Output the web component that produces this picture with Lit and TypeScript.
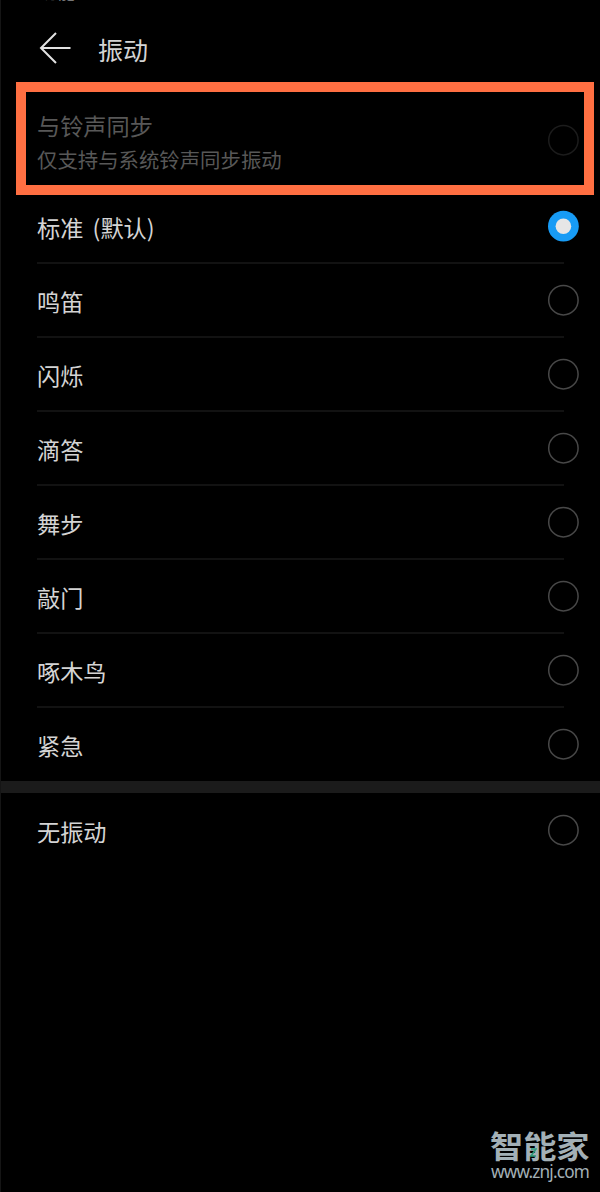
import { LitElement, html, css, svg } from "lit";
import { customElement, property } from "lit/decorators.js";
import { classMap } from "lit/directives/class-map.js";

@customElement("radio-mark")
class RadioMark extends LitElement {
  @property({ type: Boolean }) checked = false;
  @property({ type: Boolean }) disabled = false;

  static styles = css`
    :host { display: block; width: 32px; height: 32px; flex: none; }
    svg { display: block; }
    .ring { fill: none; stroke: #484848; stroke-width: 1.5; }
    .ring.off { stroke: #1c1c1c; }
    .disc { fill: #179bf5; }
    .dot { fill: #e6e6e6; }
  `;

  render() {
    return html`<svg width="32" height="32" viewBox="0 0 32 32">
      ${this.checked
        ? svg`<circle class="disc" cx="16.4" cy="16.2" r="15.4"/><circle class="dot" cx="16.4" cy="16.2" r="7.8"/>`
        : svg`<circle class=${classMap({ ring: true, off: this.disabled })} cx="16.4" cy="16.2" r="14.7"/>`}
    </svg>`;
  }
}

@customElement("app-root")
class AppRoot extends LitElement {
  static styles = css`
    :host {
      display: flex; flex-direction: column; position: relative;
      box-sizing: border-box; width: 600px; height: 1192px; overflow: hidden;
      background: #000; color: #d4d4d4;
      font-family: "Noto Sans CJK SC", sans-serif;
      font-weight: 400;
    }
    .edge { position: absolute; left: 0; top: 0; width: 1px; height: 100%; background: #151515; }
    .clipped { height: 2px; margin-bottom: 2px; padding-left: 40px; overflow: hidden; display: flex; align-items: flex-end; font-size: 17.5px; line-height: 20px; color: #777; }
    header { display: flex; align-items: center; height: 78px; padding-left: 39px; box-sizing: border-box; }
    .back { width: 33px; height: 34px; margin-top: 10px; }
    h1 { margin: 12px 0 0 26px; font-size: 25px; line-height: 36px; font-weight: inherit; }
    .framed {
      display: flex; align-items: center; justify-content: space-between;
      box-sizing: border-box; width: 578px; height: 113px; margin-left: 15.5px;
      border: 10px solid #ff6f42; padding: 2px 4.5px 0 11.5px;
    }
    .copy { color: #585858; padding-top: 4px; }
    .name { font-size: 23.2px; line-height: 34px; word-spacing: 4px; }
    .note { font-size: 20.4px; line-height: 34px; }
    .row { display: flex; align-items: center; height: 74px; padding: 0 21px 0 37px; box-sizing: border-box; justify-content: space-between; }
    .row .name { padding-top: 2px; }
    .list { margin-top: -6px; }
    .rule { height: 2px; margin: -1px 36px -1px 37px; background: #121212; }
    .band { height: 12px; background: #1b1b1b; margin-top: -0.5px; }
    .brand { position: absolute; left: 490px; top: 1127px; width: 110px; color: #a3b0b6; }
    .logo { font-size: 33.2px; line-height: 35px; height: 36px; font-weight: 700; white-space: nowrap; transform: scaleY(0.92); }
    .site { font-family: "Noto Sans", sans-serif; font-size: 17.2px; letter-spacing: -0.8px; line-height: 18px; font-weight: 400; margin-left: 1px; white-space: nowrap; }
    .spark { position: absolute; left: 40px; top: 21px; width: 7px; height: 9px; }
  `;

  private names = ["标准 (默认)", "鸣笛", "闪烁", "滴答", "舞步", "敲门", "啄木鸟", "紧急"];

  render() {
    return html`
      <div class="clipped">功能</div>
      <header>
        <svg class="back" viewBox="0 0 33 34" fill="none" stroke="#e2e2e2" stroke-width="2">
          <path d="M17 2L2 17L17 32M2 17H31.5" />
        </svg>
        <h1>振动</h1>
      </header>
      <section class="framed">
        <div class="copy">
          <div class="name">与铃声同步</div>
          <div class="note">仅支持与系统铃声同步振动</div>
        </div>
        <radio-mark disabled></radio-mark>
      </section>
      <section class="list">
        ${this.names.map((n, i) => html`
          ${i ? html`<div class="rule"></div>` : ""}
          <div class="row"><span class="name">${n}</span><radio-mark ?checked=${i === 0}></radio-mark></div>`)}
      </section>
      <div class="band"></div>
      <div class="row"><span class="name">无振动</span><radio-mark></radio-mark></div>
      <div class="edge"></div>
      <div class="brand">
        <div class="logo">智能家</div>
        <svg class="spark" viewBox="0 0 7 9" fill="none" stroke="#2f9a7a" stroke-width="1.5"><path d="M1 1H6L1 8H6" /></svg>
        <div class="site">www.znj.com</div>
      </div>
    `;
  }
}
